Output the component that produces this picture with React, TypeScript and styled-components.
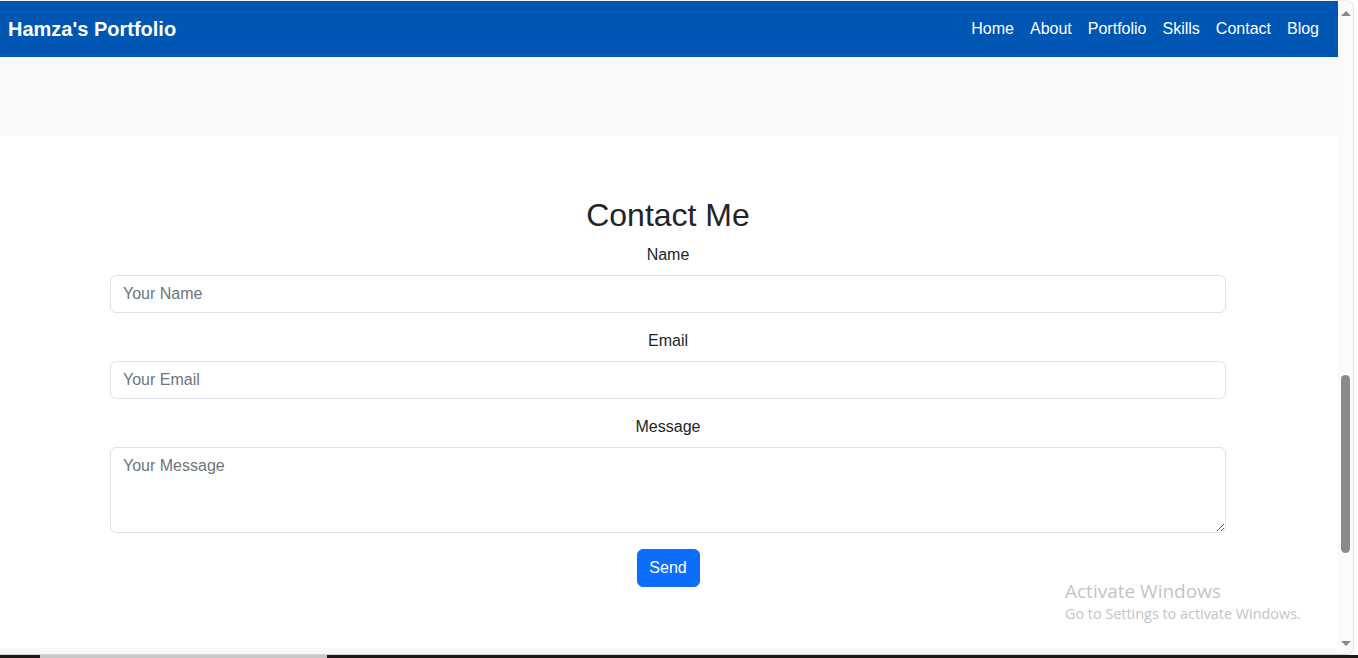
import React from "react";
import styled, { createGlobalStyle } from "styled-components";

const Global = createGlobalStyle`
  html, body { margin: 0; padding: 0; background: #ffffff; overflow: hidden; }
  * { box-sizing: border-box; }
  body { font-family: "Liberation Sans", Arial, sans-serif; color: #212529; }
`;

const Screen = styled.div`
  width: 1358px;
  height: 658px;
  display: flex;
  flex-direction: column;
  background: #ffffff;
  position: relative;
`;

const Window = styled.div`
  flex: 1;
  display: flex;
  min-height: 0;
`;

const Frame = styled.div`
  flex: 1;
  display: flex;
  border-top: 1px solid #f2f2f2;
  border-right: 1px solid #dcdcdc;
  border-bottom: 1px solid #d4d4d4;
  border-top-right-radius: 8px;
  border-bottom-right-radius: 8px;
  overflow: hidden;
  margin-right: 4px;
`;

const Page = styled.div`
  flex: 1;
  display: flex;
  flex-direction: column;
  min-width: 0;
`;

const Navbar = styled.nav`
  height: 56px;
  background: #0056b3;
  display: flex;
  align-items: center;
  justify-content: space-between;
  padding: 0 11px 0 8px;
`;

const Brand = styled.a`
  color: #ffffff;
  font-weight: 700;
  font-size: 20px;
  text-decoration: none;
  padding-top: 1px;
`;

const NavList = styled.ul`
  display: flex;
  list-style: none;
  margin: 0;
  padding: 0;
`;

const NavLink = styled.a`
  display: block;
  color: #ffffff;
  font-size: 16px;
  padding: 8px 8px;
  text-decoration: none;
`;

const Hero = styled.section`
  height: 79px;
  background: #f8f9fa;
`;

const ContactSection = styled.section`
  flex: 1;
  padding-top: 60px;
  background: #ffffff;
`;

const Container = styled.div`
  width: 1116px;
  margin: 0 auto;
  position: relative;
  left: -1px;
`;

const Heading = styled.h2`
  margin: 0 0 9px;
  font-size: 32px;
  font-weight: 400;
  line-height: 1.2;
  text-align: center;
  color: #212529;
`;

const Field = styled.div`
  margin-bottom: 16px;
`;

const Label = styled.label`
  display: block;
  text-align: center;
  font-size: 16px;
  line-height: 24px;
  margin-bottom: 8px;
  color: #212529;
`;

const inputBase = `
  display: block;
  width: 100%;
  font-family: "Liberation Sans", Arial, sans-serif;
  font-size: 16px;
  line-height: 24px;
  color: #212529;
  background: #ffffff;
  border: 1px solid #dee2e6;
  border-radius: 6px;
  padding: 6px 12px;
  outline: none;
  &::placeholder { color: #6c757d; opacity: 1; }
`;

const Input = styled.input`
  ${inputBase}
  height: 38px;
`;

const TextArea = styled.textarea`
  ${inputBase}
  height: 86px;
  resize: vertical;
`;

const ButtonRow = styled.div`
  display: flex;
  justify-content: center;
`;

const SendButton = styled.button`
  height: 38px;
  width: 63px;
  padding: 0;
  font-family: "Liberation Sans", Arial, sans-serif;
  font-size: 16px;
  color: #ffffff;
  background: #0d6efd;
  border: 1px solid #0d6efd;
  border-radius: 6px;
`;

const FooterStrip = styled.div`
  height: 6px;
  background: #f8f9fa;
`;

const Scrollbar = styled.div`
  width: 15px;
  background: #fbfbfb;
  display: flex;
  flex-direction: column;
  align-items: center;
  padding: 10px 0 8px;
`;

const Arrow = styled.div<{ $down?: boolean }>`
  width: 0;
  height: 0;
  border-left: 5px solid transparent;
  border-right: 5px solid transparent;
  ${(p) =>
    p.$down
      ? "border-top: 5px solid #8a8a8a;"
      : "border-bottom: 5px solid #8a8a8a;"}
`;

const Track = styled.div`
  flex: 1;
  width: 100%;
  display: flex;
  flex-direction: column;
  align-items: center;
  padding-top: 359px;
`;

const Thumb = styled.div`
  width: 9px;
  height: 178px;
  border-radius: 5px;
  background: #8a8a8a;
`;

const Taskbar = styled.div`
  height: 3px;
  display: flex;
  background: #1f1a17;
`;

const TaskSegment = styled.div<{ $w: number; $c: string }>`
  width: ${(p) => p.$w}px;
  background: ${(p) => p.$c};
`;

const Watermark = styled.div`
  position: absolute;
  left: 1065px;
  top: 579px;
  font-family: "Open Sans", "Noto Sans", sans-serif;
  color: #c4c4c4;
  pointer-events: none;
`;

const WmTitle = styled.div`
  font-size: 19px;
  line-height: 24px;
`;

const WmSub = styled.div`
  font-size: 14.4px;
  line-height: 21px;
`;

const links = ["Home", "About", "Portfolio", "Skills", "Contact", "Blog"];

export default function App() {
  return (
    <>
      <Global />
      <Screen>
        <Window>
          <Frame>
            <Page>
              <Navbar>
                <Brand href="#">Hamza's Portfolio</Brand>
                <NavList>
                  {links.map((l) => (
                    <li key={l}>
                      <NavLink href="#">{l}</NavLink>
                    </li>
                  ))}
                </NavList>
              </Navbar>
              <Hero />
              <ContactSection>
                <Container>
                  <Heading>Contact Me</Heading>
                  <form onSubmit={(e) => e.preventDefault()}>
                    <Field>
                      <Label htmlFor="name">Name</Label>
                      <Input id="name" type="text" placeholder="Your Name" />
                    </Field>
                    <Field>
                      <Label htmlFor="email">Email</Label>
                      <Input id="email" type="email" placeholder="Your Email" />
                    </Field>
                    <Field>
                      <Label htmlFor="message">Message</Label>
                      <TextArea id="message" rows={3} placeholder="Your Message" />
                    </Field>
                    <ButtonRow>
                      <SendButton type="submit">Send</SendButton>
                    </ButtonRow>
                  </form>
                </Container>
              </ContactSection>
              <FooterStrip />
            </Page>
            <Scrollbar>
              <Arrow />
              <Track>
                <Thumb />
              </Track>
              <Arrow $down />
            </Scrollbar>
          </Frame>
        </Window>
        <Taskbar>
          <TaskSegment $w={40} $c="#1f1a17" />
          <TaskSegment $w={287} $c="#c8c8c8" />
          <TaskSegment $w={1031} $c="#1f1a17" />
        </Taskbar>
        <Watermark>
          <WmTitle>Activate Windows</WmTitle>
          <WmSub>Go to Settings to activate Windows.</WmSub>
        </Watermark>
      </Screen>
    </>
  );
}
